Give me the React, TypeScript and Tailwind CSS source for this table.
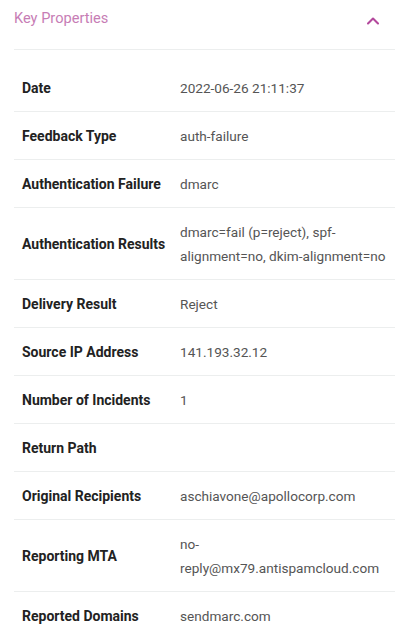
import { ChevronUp } from 'lucide-react';

const rows: [string, string][] = [
  ['Date', '2022-06-26 21:11:37'],
  ['Feedback Type', 'auth-failure'],
  ['Authentication Failure', 'dmarc'],
  ['Authentication Results', 'dmarc=fail (p=reject), spf-alignment=no, dkim-alignment=no'],
  ['Delivery Result', 'Reject'],
  ['Source IP Address', '141.193.32.12'],
  ['Number of Incidents', '1'],
  ['Return Path', ''],
  ['Original Recipients', 'aschiavone@apollocorp.com'],
  ['Reporting MTA', 'no-reply@mx79.antispamcloud.com'],
  ['Reported Domains', 'sendmarc.com'],
];

export default function App() {
  return (
    <div className="bg-white min-h-screen pl-[14px] pr-[17px] font-['Roboto',sans-serif]">
      <div className="flex items-start justify-between border-b border-[#eceeee] h-[50px] pt-[7px]">
        <h2 className="text-[14.6px] leading-[22px] text-[#c77db5] font-normal">Key Properties</h2>
        <ChevronUp size={20} strokeWidth={2.5} className="text-[#b3489c] mt-[4px] mr-[12px]" />
      </div>
      <div className="pt-[14px]">
        <table className="w-full border-collapse table-fixed">
          <tbody>
            {rows.map(([label, value], i) => (
              <tr key={label} className={i < rows.length - 1 ? 'border-b border-[#eceeee]' : ''}>
                <td className="w-[158px] pl-2 pr-0 pt-3 pb-[11px] text-[14px] leading-6 font-bold text-[#222] align-middle whitespace-nowrap">{label}</td>
                <td className="pl-2 pr-0 pt-3 pb-[11px] text-[13.6px] leading-6 text-[#555] align-middle break-words">{value}</td>
              </tr>
            ))}
          </tbody>
        </table>
      </div>
    </div>
  );
}
